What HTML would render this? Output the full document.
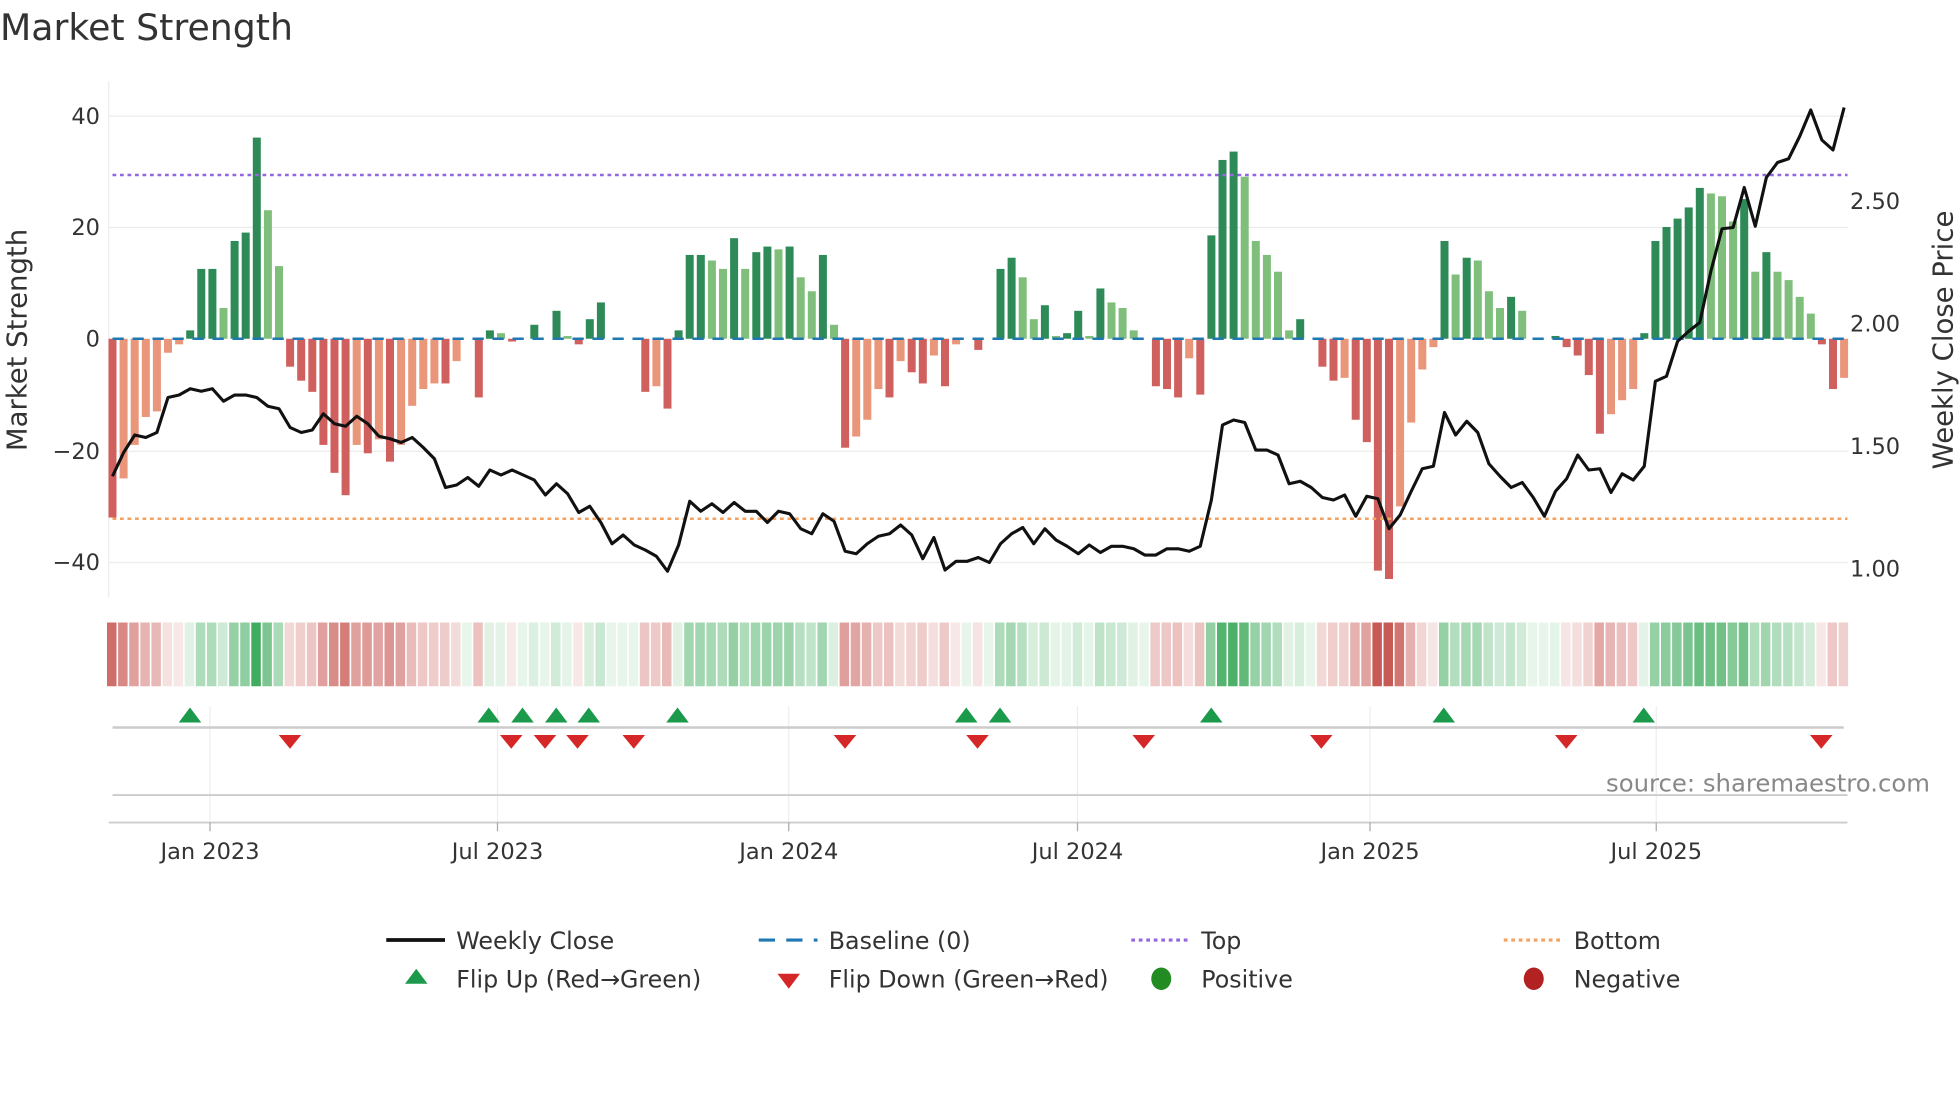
<!DOCTYPE html>
<html><head><meta charset="utf-8">
<style>html,body{margin:0;padding:0;background:#fff;width:1960px;height:1102px;overflow:hidden}
svg{display:block;font-family:"DejaVu Sans","Liberation Sans",sans-serif}</style></head>
<body>
<svg id="s" width="1960" height="1102" viewBox="0 0 1568 881.6" xmlns="http://www.w3.org/2000/svg">
<text x="0" y="32" font-size="29" fill="#333">Market Strength</text>
<g id="grid" stroke="#ececec" stroke-width="1">
<line x1="87" y1="93" x2="1478" y2="93"/><line x1="87" y1="182" x2="1478" y2="182"/>
<line x1="87" y1="361" x2="1478" y2="361"/><line x1="87" y1="450" x2="1478" y2="450"/>
<line x1="87" y1="65" x2="87" y2="478"/>
</g>
<g font-size="18" fill="#333">
<text x="80" y="99" text-anchor="end">40</text><text x="80" y="188" text-anchor="end">20</text>
<text x="80" y="277" text-anchor="end">0</text><text x="80" y="367" text-anchor="end">−20</text>
<text x="80" y="456" text-anchor="end">−40</text>
<text x="1480" y="167">2.50</text><text x="1480" y="265">2.00</text>
<text x="1480" y="363">1.50</text><text x="1480" y="461">1.00</text>
</g>
<text transform="translate(21,272) rotate(-90)" font-size="22" fill="#333" text-anchor="middle">Market Strength</text>
<text transform="translate(1562,272) rotate(-90)" font-size="22" fill="#333" text-anchor="middle">Weekly Close Price</text>
<g id="bars"></g>
<line x1="90" y1="271" x2="1478" y2="271" stroke="#1f77b4" stroke-width="2" stroke-dasharray="9,7"/>
<line x1="90" y1="140" x2="1478" y2="140" stroke="#9467e0" stroke-width="2" stroke-dasharray="3,3"/>
<line x1="90" y1="415" x2="1478" y2="415" stroke="#f4a261" stroke-width="2" stroke-dasharray="3,3"/>
<polyline id="price" fill="none" stroke="#111" stroke-width="2.5" stroke-linejoin="round"/>
<g id="heat"></g>
<g stroke="#eee"><line x1="168" y1="565" x2="168" y2="660"/><line x1="398" y1="565" x2="398" y2="660"/><line x1="631" y1="565" x2="631" y2="660"/><line x1="862" y1="565" x2="862" y2="660"/><line x1="1096" y1="565" x2="1096" y2="660"/><line x1="1325" y1="565" x2="1325" y2="660"/></g>
<line x1="90" y1="582" x2="1475" y2="582" stroke="#ccc" stroke-width="2"/>
<line x1="90" y1="636" x2="1478" y2="636" stroke="#ccc" stroke-width="1.5"/>
<line x1="87" y1="658" x2="1478" y2="658" stroke="#ccc" stroke-width="1.5"/>
<g id="tri"></g>
<text x="1544" y="633" font-size="19.5" fill="#888" text-anchor="end">source: sharemaestro.com</text>
<g font-size="18" fill="#333" text-anchor="middle">
<text x="168" y="687">Jan 2023</text><text x="398" y="687">Jul 2023</text><text x="631" y="687">Jan 2024</text>
<text x="862" y="687">Jul 2024</text><text x="1096" y="687">Jan 2025</text><text x="1325" y="687">Jul 2025</text>
</g>
<g stroke="#aaa"><line x1="168" y1="658" x2="168" y2="665"/><line x1="398" y1="658" x2="398" y2="665"/><line x1="631" y1="658" x2="631" y2="665"/><line x1="862" y1="658" x2="862" y2="665"/><line x1="1096" y1="658" x2="1096" y2="665"/><line x1="1325" y1="658" x2="1325" y2="665"/></g>
<g font-size="19" fill="#333">
<line x1="309" y1="752" x2="356" y2="752" stroke="#111" stroke-width="3"/><text x="365" y="759">Weekly Close</text>
<line x1="607" y1="752" x2="654" y2="752" stroke="#1f77b4" stroke-width="2.5" stroke-dasharray="13,9"/><text x="663" y="759">Baseline (0)</text>
<line x1="905" y1="752" x2="952" y2="752" stroke="#9467e0" stroke-width="2.5" stroke-dasharray="3,3"/><text x="961" y="759">Top</text>
<line x1="1203" y1="752" x2="1250" y2="752" stroke="#f4a261" stroke-width="2.5" stroke-dasharray="3,3"/><text x="1259" y="759">Bottom</text>
<polygon points="333,775 324,787 342,787" fill="#1a9a4a"/><text x="365" y="790">Flip Up (Red→Green)</text>
<polygon points="622,779 640,779 631,791" fill="#d62728"/><text x="663" y="790">Flip Down (Green→Red)</text>
<ellipse cx="929" cy="783" rx="8" ry="9" fill="#228b22"/><text x="961" y="790">Positive</text>
<ellipse cx="1227" cy="783" rx="8" ry="9" fill="#b22222"/><text x="1259" y="790">Negative</text>
</g>
</svg>
<script>
var v=[-32,-25,-19,-14,-13,-2.5,-1,1.5,12.5,12.5,5.5,17.5,19,36,23,13,-5,-7.5,-9.5,-19,-24,-28,-19,-20.5,-18,-22,-19,-12,-9,-8,-8,-4,0,-10.5,1.5,1,-0.5,0,2.5,0,5,0.5,-1,3.5,6.5,0,0,0,-9.5,-8.5,-12.5,1.5,15,15,14,12.5,18,12.5,15.5,16.5,16,16.5,11,8.5,15,2.5,-19.5,-17.5,-14.5,-9,-10.5,-4,-6,-8,-3,-8.5,-1,0,-2,0,12.5,14.5,11,3.5,6,0.5,1,5,0.5,9,6.5,5.5,1.5,0,-8.5,-9,-10.5,-3.5,-10,18.5,32,33.5,29,17.5,15,12,1.5,3.5,0,-5,-7.5,-7,-14.5,-18.5,-41.5,-43,-30,-15,-5.5,-1.5,17.5,11.5,14.5,14,8.5,5.5,7.5,5,0,0,0.5,-1.5,-3,-6.5,-17,-13.5,-11,-9,1,17.5,20,21.5,23.5,27,26,25.5,21,25,12,15.5,12,10.5,7.5,4.5,-1,-9,-7];
var p=[381,362,348,350,346,318,316,311,313,311,321,316,316,318,325,327,342,346,344,331,339,341,333,339,349,351,354,350,358,367,390,388,382,389,376,380,376,380,384,396,387,395,410,405,418,435,428,436,440,445,457,436,401,409,403,410,402,409,409,418,409,411,423,427,411,417,441,443,435,429,427,420,428,447,430,456,449,449,446,450,435,427,422,435,423,432,437,443,436,442,437,437,439,444,444,439,439,441,437,400,340,336,338,360,360,364,387,385,390,398,400,396,413,397,399,423,412,393,375,373,330,348,337,346,371,381,390,386,398,413,393,383,364,376,375,394,379,384,373,305,301,273,265,258,217,183,182,150,181,142,130,127,109,88,112,120,86];
var b="",h="",pts=[];
function mix(a,c,t){return "rgb("+a.map(function(x,i){return Math.round(x+(c[i]-x)*t)}).join(",")+")"}
for(var i=0;i<v.length;i++){var x=90+i*8.88,y0=271,val=v[i],pv=i?v[i-1]:0,c;
 if(val>=0)c=(val>=pv)?"#2e8b57":"#7fbf7b";else c=(val<=pv)?"#d0605e":"#e9967a";
 var hgt=Math.abs(val)*4.47;
 if(hgt>0.5)b+='<rect x="'+(x-3.2)+'" y="'+(val>=0?y0-hgt:y0)+'" width="6.4" height="'+hgt+'" fill="'+c+'"/>';
 var t=Math.min(1,0.12+Math.abs(val)/42),hc=val>=0?mix([255,255,255],[60,170,90],t):mix([255,255,255],[200,90,85],t);
 h+='<rect x="'+(x-4.4)+'" y="498" width="7.6" height="51" fill="'+hc+'"/>';
 pts.push(x.toFixed(1)+","+p[i]);}
document.getElementById("bars").innerHTML=b;document.getElementById("heat").innerHTML=h;
document.getElementById("price").setAttribute("points",pts.join(" "));
var up=[152,391,418,445,471,542,773,800,969,1155,1315],dn=[232,409,436,462,507,676,782,915,1057,1253,1457],t="";
up.forEach(function(x){t+='<polygon points="'+x+',566 '+(x-9)+',578 '+(x+9)+',578" fill="#1a9a4a"/>'});
dn.forEach(function(x){t+='<polygon points="'+(x-9)+',588 '+(x+9)+',588 '+x+',599" fill="#d62728"/>'});
document.getElementById("tri").innerHTML=t;
</script>
</body></html>
